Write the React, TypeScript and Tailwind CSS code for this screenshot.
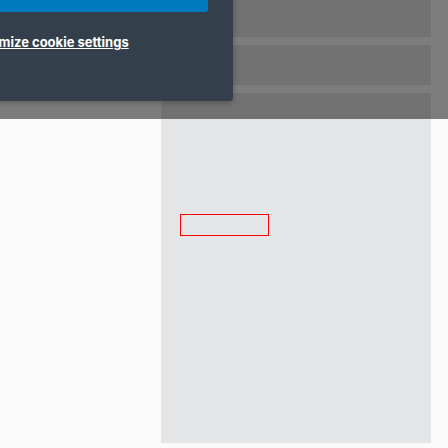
export default function App() {
  return (
    <div className="relative h-[448px] w-[448px] overflow-hidden bg-[#fafafa]" style={{ fontFamily: "Inter, 'Noto Sans', sans-serif" }}>
      <div className="flex w-[270px] flex-col gap-2 pl-0 ml-[161px]">
        <div className="h-[37px] bg-[#e4e5e7]" />
        <div className="h-[40px] bg-[#e4e5e7]" />
        <div className="h-[350px] bg-[#e4e5e7] pl-[19px] pt-[121px]">
          <div className="h-[22px] w-[89px] border border-[#ff0000]" />
        </div>
      </div>
      <div className="absolute left-0 top-0 h-[119px] w-full bg-black/50" />
      <div className="absolute left-[-200px] top-[-40px] flex w-[433px] flex-col rounded-br-[4px] bg-[#333f4a] pb-[51px] pr-[25px] shadow-[0_2px_6px_rgba(0,0,0,0.25)]">
        <div className="h-[52px] rounded-br-[3px] bg-[#0079bf]" />
        <div className="mt-[22px] pl-[161px] text-[13px] font-bold leading-[16px] text-white underline">
          Customize cookie settings
        </div>
      </div>
    </div>
  );
}
